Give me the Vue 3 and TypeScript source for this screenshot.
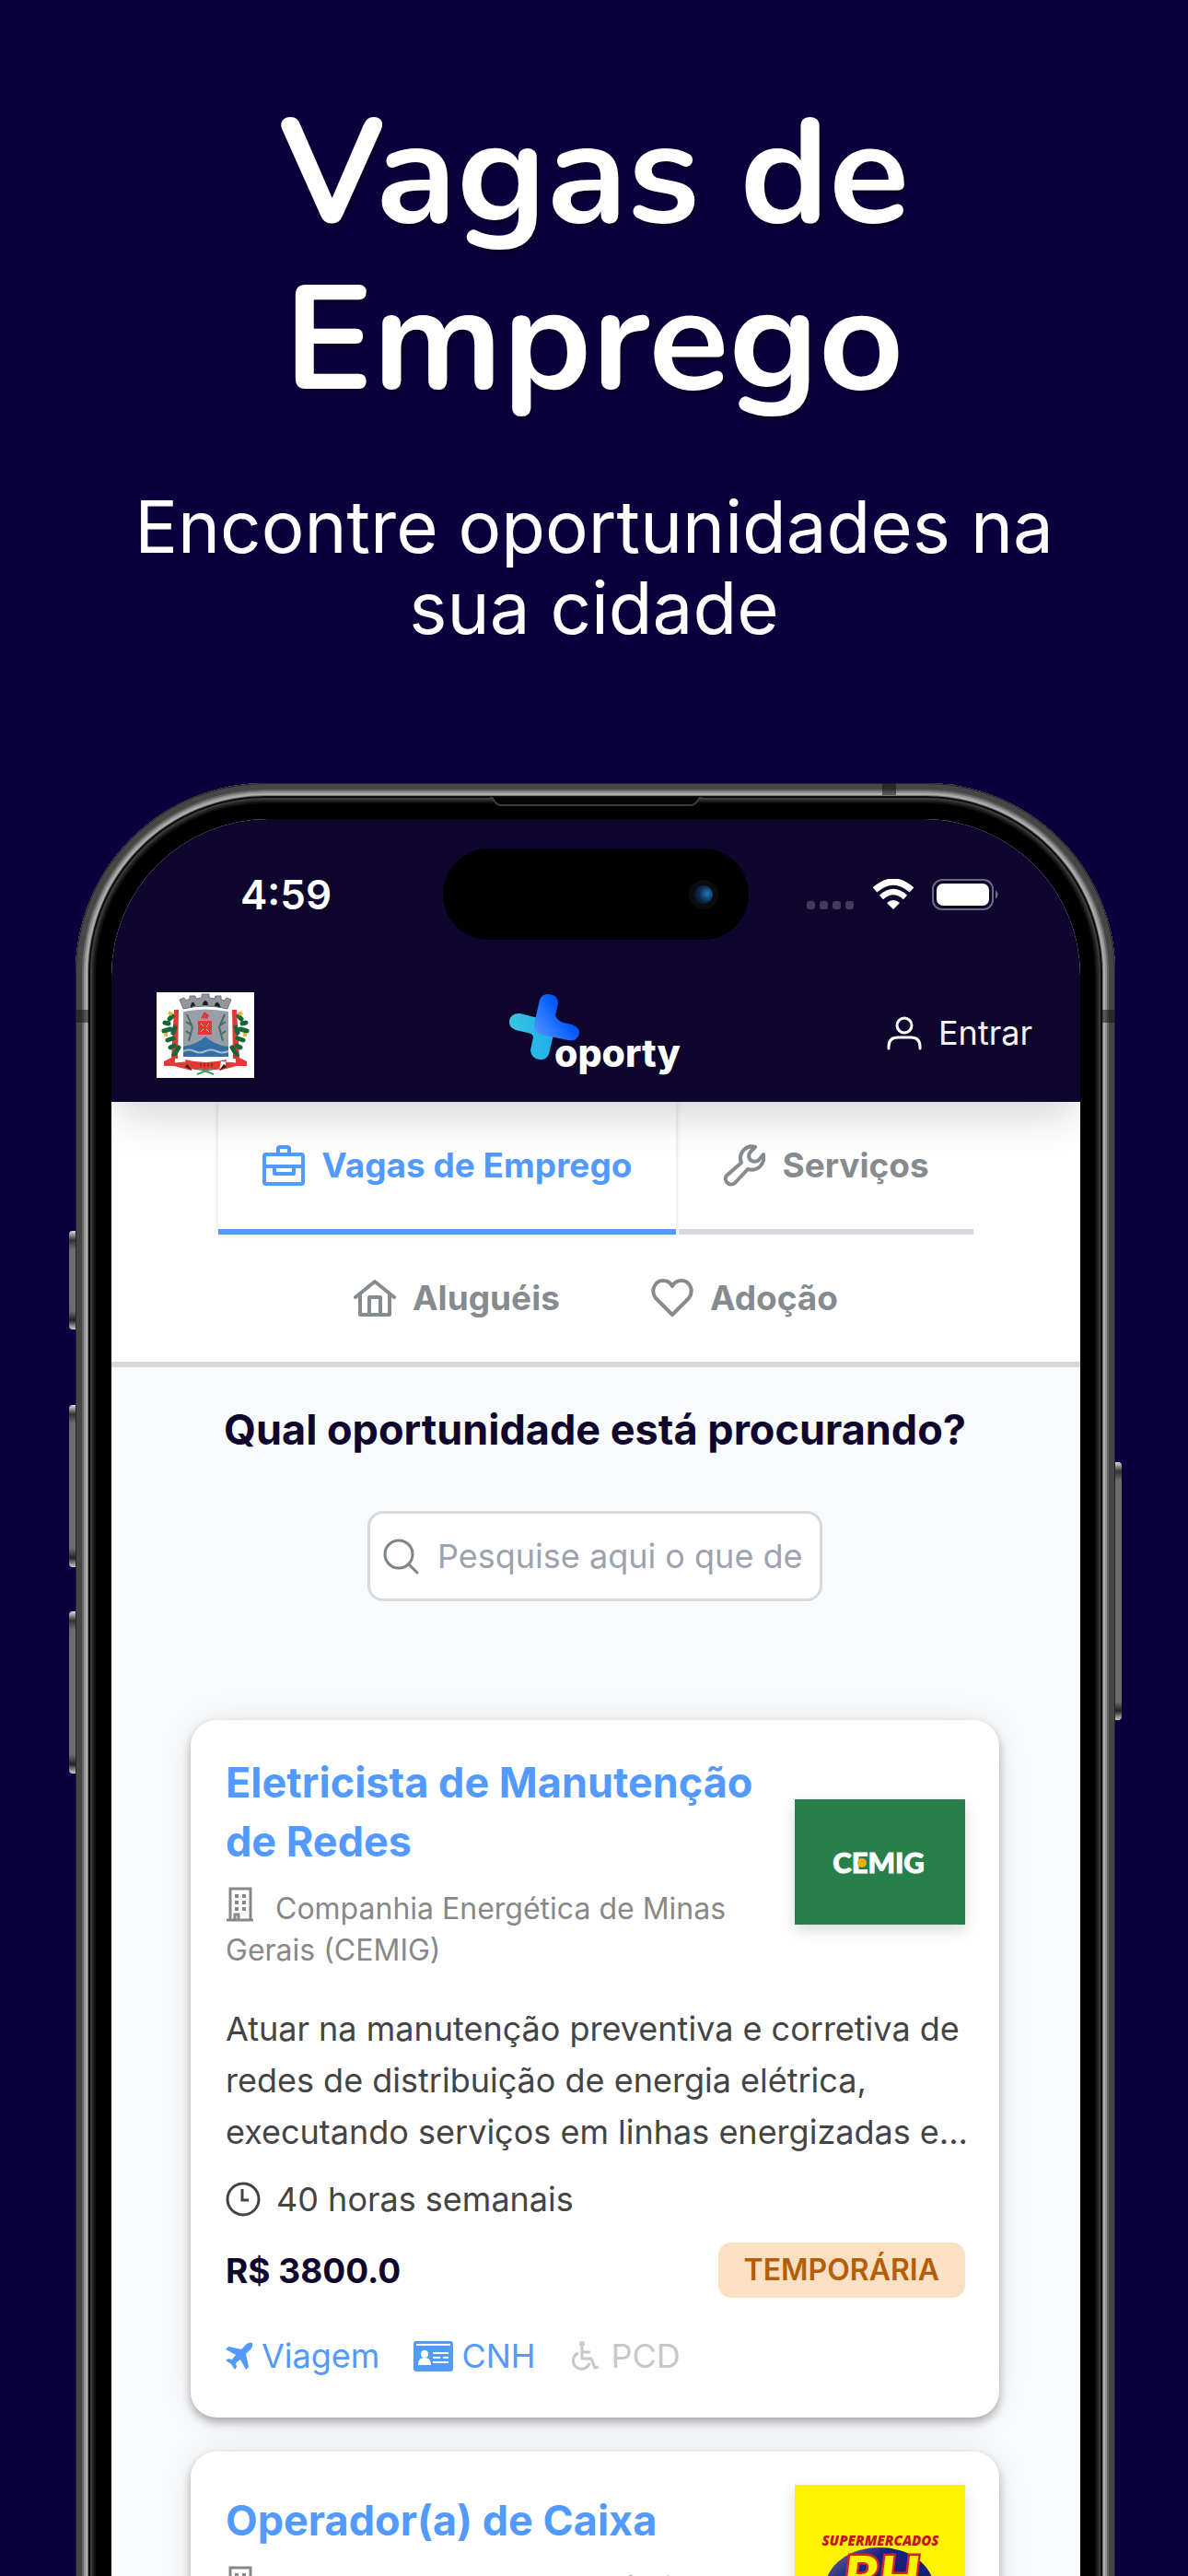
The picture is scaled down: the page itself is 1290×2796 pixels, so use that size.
<script setup lang="ts">
import { ref } from 'vue'

interface Tab { id: string; label: string; paths: string[]; box: string; w: number; h: number }
interface Job { title: string; company: string; logo: 'cemig' | 'bh'; description?: string; hours?: string; pay?: string; kind?: string }

const tabs: Tab[] = [
  { id: 'vagas', label: 'Vagas de Emprego', box: '0 0 46 46', w: 46, h: 46,
    paths: ['M4 11H42Q44 11 44 13V41Q44 43 42 43H4Q2 43 2 41V13Q2 11 4 11Z', 'M17 11V5Q17 3 19 3H27Q29 3 29 5V11', 'M2 24H44', 'M13 24V32H34V24'] },
  { id: 'servicos', label: 'Serviços', box: '0 0 46 46', w: 46, h: 46,
    paths: ['M35 3C25 0 16 10 20 20L4 34C0 39 7 47 13 42L27 27C38 30 46 21 44 11L38 18Q32 20 29 16Q27 12 30 8Z'] },
  { id: 'alugueis', label: 'Aluguéis', box: '0 0 46 42', w: 46, h: 42,
    paths: ['M2 20L23 3L44 20', 'M7 17V39H39V17', 'M17 39V20H29V39'] },
  { id: 'adocao', label: 'Adoção', box: '0 0 46 42', w: 46, h: 42,
    paths: ['M23 39L5 21C-1 13 4 2 13 2C18 2 21 4 23 8C25 4 28 2 33 2C42 2 47 13 41 21Z'] },
]
const active = ref('vagas')
const query = ref('')

const jobs: Job[] = [
  { title: 'Eletricista de Manutenção de Redes', company: 'Companhia Energética de Minas Gerais (CEMIG)', logo: 'cemig',
    description: 'Atuar na manutenção preventiva e corretiva de redes de distribuição de energia elétrica, executando serviços em linhas energizadas e...',
    hours: '40 horas semanais', pay: 'R$ 3800.0', kind: 'TEMPORÁRIA' },
  { title: 'Operador(a) de Caixa', company: 'Supermercados BH Comércio de Alimentos', logo: 'bh' },
]
</script>

<template>
  <main class="page">
    <header class="hero">
      <h1>Vagas de<br>Emprego</h1>
      <p>Encontre oportunidades na sua cidade</p>
    </header>

    <div class="phone">
      <i class="key key-a"></i><i class="key key-b"></i><i class="key key-c"></i><i class="key key-d"></i>
      <i class="band band-left"></i><i class="band band-right"></i><i class="band band-top"></i>
      <svg class="speaker" width="230" height="11" viewBox="0 0 230 11" aria-hidden="true">
        <path d="M0 0C5 0 4 9 12 9H218C226 9 225 0 230 0" fill="#050505" stroke="#3c3c3c" stroke-width="2" />
      </svg>

      <div class="screen">
        <div class="status">
          <time>4:59</time>
          <div class="island"><i></i></div>
          <div class="signals">
            <svg width="52" height="34" viewBox="0 0 52 34" fill="#423b5c" aria-hidden="true">
              <rect x="0" y="24" width="9" height="9" rx="3" /><rect x="14" y="24" width="9" height="9" rx="3" />
              <rect x="28" y="24" width="9" height="9" rx="3" /><rect x="42" y="24" width="9" height="9" rx="3" />
            </svg>
            <svg width="44" height="34" viewBox="0 0 44 34" fill="none" stroke="#fff" aria-hidden="true">
              <path d="M2 12Q22 -6 42 12" stroke-width="7" /><path d="M9 20Q22 8 35 20" stroke-width="6" />
              <path d="M15 26Q22 20 29 26L22 33Z" fill="#fff" stroke="none" />
            </svg>
            <svg width="74" height="34" viewBox="0 0 74 34" aria-hidden="true">
              <rect x="1" y="1" width="65" height="32" rx="10" fill="none" stroke="#6d6882" stroke-width="2" />
              <rect x="5" y="5" width="57" height="24" rx="7" fill="#fff" /><path d="M69 12Q74 17 69 22Z" fill="#6d6882" />
            </svg>
          </div>
        </div>

        <div class="appbar">
          <svg class="crest" width="106" height="93" viewBox="0 0 106 93" role="img" aria-label="Brasão municipal">
            <path fill="#fff" d="M0 0H106V93H0Z" />
            <path fill="#df3a35" d="M19 19H24L23 72H16ZM82 19H87L90 72H83Z" />
            <g fill="none" stroke="#16663b" stroke-width="5" stroke-linecap="round">
              <path d="M17 26L14 29M9 33L13 34M8 42L15 40M18 50L12 52M19 58L15 60M24 60L19 68M20 38L18 44" />
              <path d="M89 26L92 29M97 33L93 34M98 42L91 40M88 50L94 52M87 58L91 60M82 60L87 68M86 38L88 44" />
            </g>
            <path d="M13 22L17 24M93 22L89 24M8 46H12M94 46H98" stroke="#e0bd24" stroke-width="4" />
            <path fill="#92969d" stroke="#6f747c" d="M25 8L30 6L32 9L36 7L36 4L42 4L43 7L49 6V2H57V6L63 7L64 4H70V8L74 9L76 6L81 8L77 18Q53 12 29 18Z" />
            <path d="M38 15Q39 9 41 14ZM51 13Q53 7 55 13ZM64 14Q66 9 68 15Z" stroke="#222" stroke-width="2" />
            <path fill="#9a9ea6" d="M29 21Q53 16 78 21V62H29Z" />
            <path d="M33 24L39 38L35 53M74 24L68 38L72 53M32 32L38 36M75 32L69 36M32 42L36 45M75 42L71 45" fill="none" stroke="#456f67" stroke-width="2" />
            <path fill="#356fa7" d="M29 59Q45 56 53 48Q62 57 78 59V70H29Z" />
            <path d="M29 64Q35 61 41 64T53 64T65 64T78 64" fill="none" stroke="#a8bbc9" stroke-width="2" />
            <path fill="#df3a35" d="M45 31H60V46H45ZM48 28L52 21L57 25L55 29ZM8 75L20 69V80L8 80ZM98 75L86 69V80L98 80ZM14 77L36 75L38 85L15 79ZM92 77L70 75L68 85L91 79ZM31 73Q53 79 76 73L74 82Q53 88 33 82Z" />
            <path d="M48 34L51 37M57 34L54 37M48 43L51 40M57 43L54 40" stroke="#ffd8bd" />
            <path d="M33 78L39 85L31 81ZM73 78L68 85L76 81Z" fill="#222" />
            <path d="M48 77V81M52 77V81M56 77V81M60 77V81" stroke="#7b1517" />
            <path d="M44 89L60 83M46 83L62 89" stroke="#4b9c68" stroke-width="2" />
          </svg>
          <a class="brand" href="#" aria-label="oporty">
            <svg width="78" height="74" viewBox="0 0 78 74" aria-hidden="true">
              <defs>
                <linearGradient id="cyan" x1="0" y1="0" x2="1" y2="0"><stop stop-color="#36c5e3" /><stop offset="1" stop-color="#21aeea" /></linearGradient>
                <linearGradient id="blue" x1="0" y1="1" x2=".7" y2=".5"><stop stop-color="#5c9cff" /><stop offset="1" stop-color="#0057ff" /></linearGradient>
              </defs>
              <path fill="url(#cyan)" d="M13 23L36 29L49 46L44 67Q41 74 34 73Q25 72 24 63L27 49Q27 45 21 44L8 41Q0 38 1 31Q3 22 13 23Z" />
              <path fill="url(#blue)" d="M34 8Q37 1 44 2Q54 3 54 12L51 25Q53 31 60 33L69 35Q78 39 77 45Q74 54 65 52L36 46Q27 43 28 35Z" />
            </svg>
            <span>oporty</span>
          </a>
          <button class="login" type="button">
            <svg width="38" height="38" viewBox="0 0 38 38" fill="none" stroke="#fff" stroke-width="3" stroke-linecap="round" aria-hidden="true">
              <circle cx="19" cy="11" r="8" /><path d="M2 36V34Q2 24 12 24H26Q36 24 36 34V36" />
            </svg>
            Entrar
          </button>
        </div>

        <nav class="tabs">
          <button v-for="t in tabs" :key="t.id" type="button" class="tab" :class="{ active: active === t.id, plain: t.h === 42 }" @click="active = t.id">
            <svg :width="t.w" :height="t.h" :viewBox="t.box" fill="none" stroke="currentColor" stroke-width="4" stroke-linejoin="round" stroke-linecap="round" aria-hidden="true">
              <path v-for="p in t.paths" :key="p" :d="p" />
            </svg>
            {{ t.label }}
          </button>
        </nav>

        <section class="content">
          <h2>Qual oportunidade está procurando?</h2>
          <label class="search">
            <svg width="40" height="40" viewBox="0 0 40 40" fill="none" stroke="#7d848b" stroke-width="3" stroke-linecap="round" aria-hidden="true">
              <circle cx="18" cy="18" r="15" /><path d="M29 29L38 38" />
            </svg>
            <input v-model="query" type="text" aria-label="Pesquisar" placeholder="Pesquise aqui o que deseja">
          </label>

          <article v-for="job in jobs" :key="job.title" class="card">
            <div class="head">
              <div class="who">
                <h3>{{ job.title }}</h3>
                <p class="company">
                  <svg width="30" height="38" viewBox="0 0 30 38" fill="none" stroke="#888" stroke-width="3" aria-hidden="true">
                    <path d="M5 36V2H27V36M1 36H30" /><path d="M12 8V12M12 15V19M12 22V26M20 8V12M20 15V19M20 22V26" stroke-width="4" /><path d="M10 36V30H14V36" />
                  </svg>{{ job.company }}
                </p>
              </div>
              <svg v-if="job.logo === 'cemig'" class="logo" width="185" height="136" viewBox="0 0 185 136" role="img" aria-label="CEMIG">
                <path fill="#277f4b" d="M0 0H185V136H0Z" />
                <text x="91" y="80" text-anchor="middle" fill="#fff" stroke="#fff" stroke-width="1" font-family="Lato, sans-serif" font-weight="900" font-size="31">CEMIG</text>
                <circle cx="73" cy="69" r="5" fill="#eab010" />
              </svg>
              <svg v-else class="logo" width="185" height="185" viewBox="0 0 185 185" role="img" aria-label="Supermercados BH">
                <defs><linearGradient id="orb" x1="0" y1="0" x2="1" y2="1"><stop stop-color="#7774a4" /><stop offset=".3" stop-color="#1a237b" /><stop offset="1" stop-color="#101a70" /></linearGradient></defs>
                <path fill="#fff200" d="M0 0H185V185H0Z" />
                <ellipse cx="92" cy="112" rx="59" ry="44" fill="url(#orb)" />
                <text x="93" y="66" text-anchor="middle" fill="#c01820" font-family="Open Sans, sans-serif" font-weight="800" font-style="italic" font-size="15">SUPERMERCADOS</text>
                <text x="94" y="123" text-anchor="middle" fill="#fff200" stroke="#d3202a" stroke-width="5" paint-order="stroke" font-family="Lato, sans-serif" font-weight="900" font-style="italic" font-size="62">BH</text>
              </svg>
            </div>

            <template v-if="job.description">
              <p class="desc">{{ job.description }}</p>
              <p class="hours">
                <svg width="38" height="38" viewBox="0 0 38 38" fill="none" stroke="#444" stroke-width="3" aria-hidden="true"><circle cx="19" cy="19" r="17" /><path d="M18 8V20H25" /></svg>
                {{ job.hours }}
              </p>
              <div class="pay"><strong>{{ job.pay }}</strong><span>{{ job.kind }}</span></div>
              <ul class="tags">
                <li>
                  <svg width="30" height="30" viewBox="0 0 30 30" fill="currentColor" aria-hidden="true"><path d="M29 1Q30 6 26 9L22 13L25 27L22 30L16 19L11 23L12 27L10 30L6 24L0 20L3 18L7 19L11 14L0 8L3 5L17 8L21 4Q24 0 29 1Z" /></svg>
                  Viagem
                </li>
                <li>
                  <svg width="43" height="33" viewBox="0 0 43 33" aria-hidden="true">
                    <rect width="43" height="33" rx="3" fill="currentColor" />
                    <path d="M3 4H40M21 13H38M21 18H29M32 18H38M21 23H38" stroke="#fff" stroke-width="2" />
                    <circle cx="12" cy="14" r="4" fill="#fff" /><path d="M5 26Q5 18 12 18T19 26Z" fill="#fff" />
                  </svg>
                  CNH
                </li>
                <li class="off">
                  <svg width="36" height="34" viewBox="0 0 36 34" fill="none" stroke="currentColor" stroke-width="3" aria-hidden="true">
                    <circle cx="13" cy="4" r="3" fill="currentColor" stroke="none" /><path d="M13 7V20H23L27 30L31 29M13 13H22M9 14A9 9 0 1 0 21 25" />
                  </svg>
                  PCD
                </li>
              </ul>
            </template>
          </article>
        </section>
      </div>
    </div>
  </main>
</template>

<style>
body { margin: 0; background: #09003d; }
</style>

<style scoped>
* { box-sizing: border-box; margin: 0; }
.page { height: 100vh; overflow: hidden; background: #09003d; font-family: Inter, "Liberation Sans", sans-serif; }
.hero { color: #fff; text-align: center; padding: 98px 100px 0; }
h1 { font: 700 161px/181px Nunito, "Noto Sans", sans-serif; text-shadow: 3px 5px 6px rgba(0, 0, 0, .3); }
.hero p { font-size: 78px; line-height: 88px; margin-top: 68px; }

.phone {
  position: relative; margin: 146px 79px 0 82px; padding: 39px 38px 0 39px;
  border-radius: 206px 206px 0 0; background: #000;
  box-shadow: inset 0 0 0 1px #242424, inset 0 0 0 7px #464646, inset 0 0 0 9px #666, inset 0 0 0 11px #929292,
    inset 0 0 0 13px #adadad, inset 0 0 0 14px #777, inset 0 0 0 16px #0c0c0c, inset 0 0 0 18px #3b3b3b, inset 0 0 0 20px #242424, inset 0 0 0 22px #101010;
}
.key { position: absolute; width: 7px; left: -7px; border-radius: 4px 0 0 4px; background: linear-gradient(#ddd, #333 10px, #6c6c6c 20px, #6c6c6c calc(100% - 20px), #222 calc(100% - 10px), #ccc); }
.key-a { top: 486px; height: 107px; }
.key-b { top: 675px; height: 176px; }
.key-c { top: 899px; height: 176px; }
.key-d { top: 737px; height: 280px; left: auto; right: -7px; border-radius: 0 4px 4px 0; }
.band { position: absolute; background: rgba(20, 20, 20, .55); }
.band-left { left: 0; top: 246px; width: 14px; height: 14px; }
.band-right { right: 0; top: 246px; width: 14px; height: 14px; }
.band-top { right: 238px; top: 0; width: 15px; height: 13px; }
.speaker { position: absolute; top: 15px; left: 50%; margin-left: -115px; }

.screen { border-radius: 170px 170px 0 0; overflow: hidden; background: #f9fafc; }
.status { position: relative; z-index: 1; background: #0e062d; display: grid; grid-template-columns: 1fr 332px 1fr; align-items: center; padding: 32px 0 31px; }
.status time { color: #fff; font-size: 44px; line-height: 52px; font-weight: 600; padding-left: 140px; }
.island { height: 99px; border-radius: 50px; background: #000; display: flex; align-items: center; justify-content: flex-end; padding-right: 33px; }
.island i { width: 32px; height: 32px; border-radius: 50%; border: 6px solid #0b0c0e; background: radial-gradient(circle at 70% 45%, #2376b5, #0b2950 50%, #07101c); }
.signals { display: flex; gap: 20px; justify-content: flex-end; padding-right: 87px; }

.appbar { position: relative; background: #0e062d; display: grid; grid-template-columns: 1fr auto 1fr; align-items: center; height: 145px; padding: 0 52px 0 49px; box-shadow: 0 20px 45px -5px rgba(0, 0, 0, .17); }
.brand { display: flex; align-items: flex-end; text-decoration: none; color: #fff; height: 88px; margin-bottom: 6px; }
.brand svg { align-self: flex-start; margin-right: -28px; }
.brand span { font: 800 41px/44px Inter, sans-serif; }
.login { justify-self: end; display: flex; align-items: center; gap: 18px; margin-bottom: 5px; border: 0; padding: 0; background: none; color: #f5f4fa; font: 400 36px/44px Inter, sans-serif; }

.tabs { display: flex; flex-wrap: wrap; justify-content: center; column-gap: 3px; background: #fff; border-bottom: 6px solid #d5d8dc; }
.tab { display: flex; align-items: center; gap: 18px; height: 144px; padding: 0 48px; border: 0; border-bottom: 6px solid #d5d8dc; background: none; color: #868b90; font: 700 37px/44px Inter, sans-serif; }
.tab.active { color: #529aff; border-color: #529aff; box-shadow: 0 0 6px rgba(0, 0, 0, .15); }
.tab.plain { border: 0; height: 138px; }

.content { padding: 38px 88px 60px 86px; }
h2 { color: #0e062d; text-align: center; font-size: 45px; line-height: 60px; font-weight: 700; }
.search { display: flex; align-items: center; width: 494px; height: 98px; margin: 58px auto 129px; padding: 0 20px 0 13px; gap: 20px; border: 3px solid #d7dadd; border-radius: 17px; background: #fff; }
.search svg { flex: none; }
.search input { min-width: 0; flex: 1; border: 0; padding: 0; outline: 0; background: none; font: 400 36px/44px Inter, sans-serif; }
.search input::placeholder { color: #9ca3af; opacity: 1; }

.card { background: #fff; border-radius: 28px; margin-bottom: 37px; padding: 36px 37px 39px 38px; box-shadow: 0 5px 10px rgba(0, 0, 0, .3), 0 0 40px rgba(0, 0, 0, .08); }
.head { display: flex; align-items: center; justify-content: space-between; gap: 20px; }
.who { flex: 1; }
h3 { color: #529aff; font-size: 45px; line-height: 64px; font-weight: 700; }
.company { color: #888; font-size: 32px; line-height: 45px; margin-top: 18px; }
.company svg { margin-right: 24px; vertical-align: -3px; margin-top: -8px; }
.logo { flex: none; box-shadow: 0 6px 16px rgba(0, 0, 0, .15); }
.desc { color: #444; font-size: 36px; line-height: 56px; margin: 35px -12px 0 0; }
.hours { display: flex; align-items: center; gap: 17px; color: #444; font-size: 36px; line-height: 56px; margin-top: 17px; }
.pay { display: flex; align-items: center; justify-content: space-between; margin-top: 19px; }
.pay strong { color: #0e062d; font-size: 37px; font-weight: 700; }
.pay span { background: #fce0c4; color: #b45f06; border-radius: 14px; padding: 0 28px; font-size: 32px; line-height: 60px; font-weight: 600; }
.tags { display: flex; gap: 37px; margin-top: 35px; padding: 0; list-style: none; color: #529aff; font-size: 36px; line-height: 56px; }
.tags li { display: flex; align-items: center; gap: 9px; }
.tags .off { color: #c8c8c8; }
</style>
